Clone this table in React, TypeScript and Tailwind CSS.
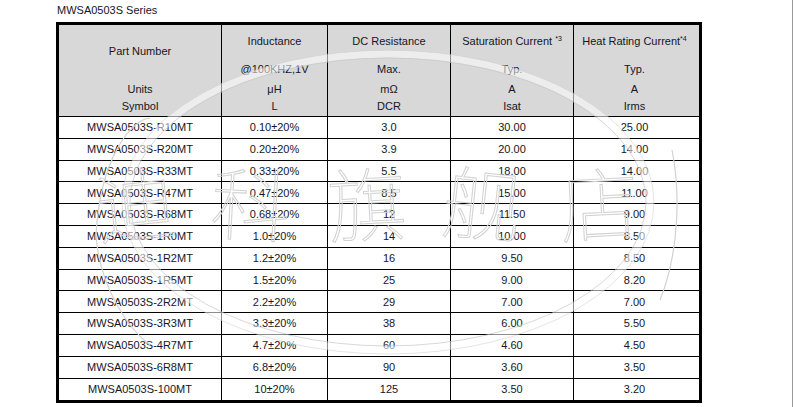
import React from "react";

type Row = [string, string, string, string, string];

const rows: Row[] = [
  ["MWSA0503S-R10MT", "0.10±20%", "3.0", "30.00", "25.00"],
  ["MWSA0503S-R20MT", "0.20±20%", "3.9", "20.00", "14.00"],
  ["MWSA0503S-R33MT", "0.33±20%", "5.5", "18.00", "14.00"],
  ["MWSA0503S-R47MT", "0.47±20%", "8.5", "15.00", "11.00"],
  ["MWSA0503S-R68MT", "0.68±20%", "12", "11.50", "9.00"],
  ["MWSA0503S-1R0MT", "1.0±20%", "14", "10.00", "8.50"],
  ["MWSA0503S-1R2MT", "1.2±20%", "16", "9.50", "8.50"],
  ["MWSA0503S-1R5MT", "1.5±20%", "25", "9.00", "8.20"],
  ["MWSA0503S-2R2MT", "2.2±20%", "29", "7.00", "7.00"],
  ["MWSA0503S-3R3MT", "3.3±20%", "38", "6.00", "5.50"],
  ["MWSA0503S-4R7MT", "4.7±20%", "60", "4.60", "4.50"],
  ["MWSA0503S-6R8MT", "6.8±20%", "90", "3.60", "3.50"],
  ["MWSA0503S-100MT", "10±20%", "125", "3.50", "3.20"],
];

const widths = ["w-[163px]", "w-[106px]", "w-[123px]", "w-[123px]", "w-[121px]"];

function HeadCol({
  width,
  title,
  cond,
  unit,
  symbol,
  last,
}: {
  width: string;
  title: React.ReactNode;
  cond: string;
  unit: string;
  symbol: string;
  last?: boolean;
}) {
  return (
    <div className={`${width} flex flex-col items-center ${last ? "" : "border-r border-black"}`}>
      <div className="h-[32px] flex items-center">{title}</div>
      <div className="h-[24px] flex items-center">{cond}</div>
      <div className="h-[16px] flex items-center">{unit}</div>
      <div className="h-[19px] flex items-center">{symbol}</div>
    </div>
  );
}

// faint shop watermark laid over the scanned table
function Watermark() {
  return (
    <div className="absolute inset-0 pointer-events-none">
      <svg width="794" height="407" viewBox="0 0 794 407" className="absolute inset-0">
        <ellipse cx="388" cy="202" rx="262" ry="148" fill="none" stroke="#ffffff" strokeOpacity="0.55" strokeWidth="7" />
        <ellipse cx="388" cy="202" rx="258" ry="144" fill="none" stroke="#c8c8c8" strokeOpacity="0.7" strokeWidth="1" />
        <ellipse cx="388" cy="202" rx="266" ry="152" fill="none" stroke="#d4d4d4" strokeOpacity="0.6" strokeWidth="1" />
        <path d="M96 235 C 100 160, 130 120, 150 118" fill="none" stroke="#d2d2d2" strokeWidth="1.2" />
        <path d="M96 235 C 100 290, 130 330, 150 345" fill="none" stroke="#d2d2d2" strokeWidth="1.2" />
        <path d="M672 150 C 680 190, 680 250, 660 300" fill="none" stroke="#d2d2d2" strokeWidth="1.2" />
      </svg>
      <div className="absolute left-[95px] top-[160px] flex gap-[36px] text-[80px] leading-none font-['Noto_Sans_CJK_SC',sans-serif] font-thin text-transparent [-webkit-text-stroke:1px_#d2d2d2]">
        <span className="-rotate-6">迪</span>
        <span className="rotate-3">科</span>
        <span className="-rotate-3">旗</span>
        <span className="rotate-6">舰</span>
        <span className="-rotate-3">店</span>
      </div>
    </div>
  );
}

export default function App() {
  return (
    <div className="relative w-[794px] h-[407px] bg-white overflow-hidden font-['Liberation_Sans',Arial,sans-serif] text-[11px] text-[#15151f]">
      <div className="absolute right-[1px] top-0 bottom-0 w-px bg-[#9a9a9a]" />
      <div className="pl-[57px] pt-[3px] h-[22px] leading-[14px]">MWSA0503S Series</div>
      <div className="ml-[56px] w-[646px] border-[3px] border-black">
        <div className="flex h-[92px] bg-[#d8d8d8] border-b border-black">
          <div className={`${widths[0]} flex flex-col items-center border-r border-black`}>
            <div className="h-[52px] flex items-center">Part Number</div>
            <div className="h-[4px]" />
            <div className="h-[16px] flex items-center">Units</div>
            <div className="h-[19px] flex items-center">Symbol</div>
          </div>
          <HeadCol width={widths[1]} title="Inductance" cond="@100KHZ,1V" unit="μH" symbol="L" />
          <HeadCol width={widths[2]} title="DC Resistance" cond="Max." unit="mΩ" symbol="DCR" />
          <HeadCol
            width={widths[3]}
            title={
              <span>
                Saturation Current <sup className="text-[7px] -top-[0.6em]">*3</sup>
              </span>
            }
            cond="Typ."
            unit="A"
            symbol="Isat"
          />
          <HeadCol
            width={widths[4]}
            title={
              <span>
                Heat Rating Current<sup className="text-[7px] -top-[0.6em]">*4</sup>
              </span>
            }
            cond="Typ."
            unit="A"
            symbol="Irms"
            last
          />
        </div>
        {rows.map((r, i) => (
          <div key={i} className={`flex h-[21.8px] ${i < rows.length - 1 ? "border-b border-black" : ""}`}>
            {r.map((cell, j) => (
              <div
                key={j}
                className={`${widths[j]} flex items-center justify-center ${j < 4 ? "border-r border-black" : ""}`}
              >
                {cell}
              </div>
            ))}
          </div>
        ))}
      </div>
      <Watermark />
    </div>
  );
}
